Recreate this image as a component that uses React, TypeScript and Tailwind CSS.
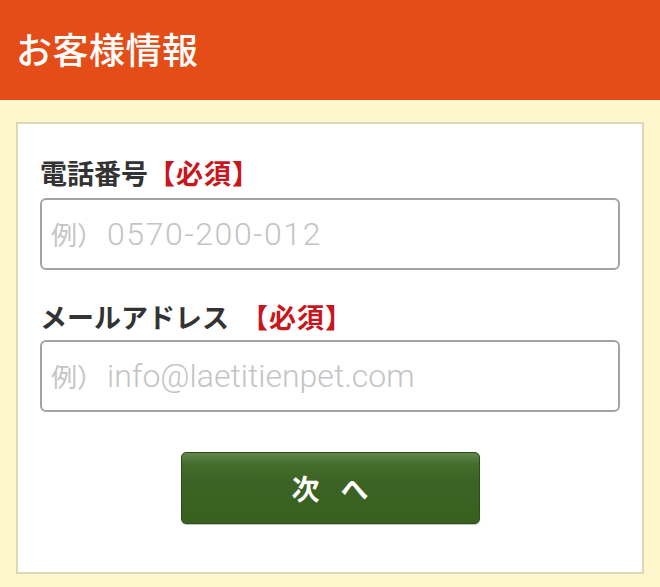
import React from "react";

const font = { fontFamily: '"Noto Sans CJK JP", "Noto Sans", sans-serif' };
const latin = { fontFamily: 'Roboto, "Noto Sans CJK JP", sans-serif' };

type FieldProps = { type: string; example: string; wide?: boolean };

const Field: React.FC<FieldProps> = ({ type, example, wide }) => {
  const [value, setValue] = React.useState("");
  return (
    <div className="relative">
      <input
        type={type}
        value={value}
        onChange={(e) => setValue(e.target.value)}
        aria-label={"例）" + example}
        className="block w-full h-[72px] border-2 border-[#a3a3a3] rounded-[6px] px-[9px] text-[26px] text-[#333] outline-none bg-white"
        style={latin}
      />
      {/* placeholder overlay (mixed font sizes) */}
      {value === "" && (
        <div className="pointer-events-none absolute inset-0 flex items-center pl-[11px] text-[#c4c4c4] whitespace-nowrap">
          <span className="text-[26px] leading-none mr-[4px]" style={font}>
            例）
          </span>
          <span
            className={
              wide
                ? "text-[32px] font-light leading-none pb-[1px] tracking-[1.6px]"
                : "text-[32px] font-light leading-none pb-[1px]"
            }
            style={latin}
          >
            {example}
          </span>
        </div>
      )}
    </div>
  );
};

const App: React.FC = () => {
  return (
    <div className="min-h-[587px] bg-[#fef6cd]" style={font}>
      {/* Header */}
      <div className="h-[100px] bg-[#e44d17] flex items-center px-4">
        <h1 className="text-[36px] font-medium text-white leading-none tracking-[0.5px] pb-[4px]">
          お客様情報
        </h1>
      </div>

      {/* Card */}
      <div className="pt-[22px] px-4">
        <div className="bg-white border-2 border-[#ddd7b6] pt-[31px] px-[22px] pb-[48px]">
          <label className="block h-[36px] leading-[36px] text-[27px] font-bold text-[#333] mb-[7px]">
            電話番号<span className="text-[#c8161d] tracking-[1px]">【必須】</span>
          </label>
          <Field type="tel" example="0570-200-012" wide />

          <label className="block h-[36px] leading-[36px] text-[27px] font-bold text-[#333] mt-[29px] mb-[5px]">
            メールアドレス<span className="inline-block w-[12px]" />
            <span className="text-[#c8161d] tracking-[1px]">【必須】</span>
          </label>
          <Field type="email" example="info@laetitienpet.com" />

          <div className="flex justify-center mt-[40px]">
            <button
              className="w-[299px] h-[72px] rounded-[5px] border border-[#2e4c1b] bg-[linear-gradient(to_bottom,#62874c_0%,#456d2c_16%,#3c6323_40%,#38601f_100%)] text-white text-[28px] font-bold tracking-[21px] pl-[21px] shadow-[0_1px_1px_rgba(0,0,0,0.25)]"
              style={font}
            >
              次へ
            </button>
          </div>
        </div>
      </div>
    </div>
  );
};

export default App;
